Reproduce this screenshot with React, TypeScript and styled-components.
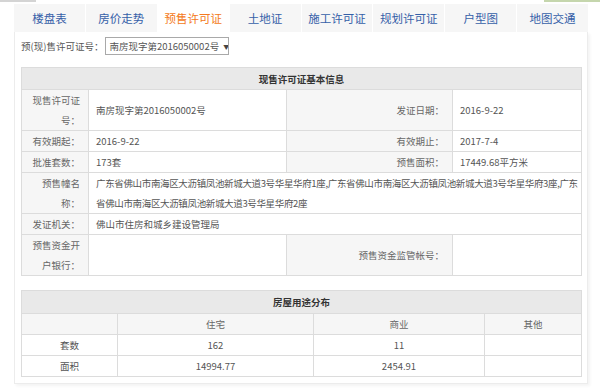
import React, { useState } from 'react';
import styled, { createGlobalStyle } from 'styled-components';

const GlobalStyle = createGlobalStyle`
  html, body {
    margin: 0;
    padding: 0;
    background: #fff;
    font-family: "Noto Sans CJK SC", "Noto Sans", sans-serif;
  }
`;

const Page = styled.div`
  width: 600px;
  height: 388px;
  overflow: hidden;
  background: #fff;
`;

const TopStrip = styled.div`
  height: 4px;
  display: flex;
  justify-content: space-between;
`;

const StripPiece = styled.div<{ $w: number; $color: string }>`
  width: ${p => p.$w}px;
  height: 2px;
  background: ${p => p.$color};
`;

const Tabs = styled.div`
  margin-left: 14px;
  width: 574px;
  height: 28px;
  display: flex;
  background: #f5f5f5;
`;

const Tab = styled.div<{ $active?: boolean }>`
  flex: 1;
  text-align: center;
  line-height: 28px;
  font-size: 11.5px;
  color: ${p => (p.$active ? '#f47a20' : '#3560a8')};
  background: ${p => (p.$active ? '#fff' : '#f6f6f6')};
  border-right: 1px solid #fff;
  cursor: pointer;

  &:last-child {
    border-right: none;
  }
`;

const Panel = styled.div`
  margin-left: 14px;
  width: 574px;
  box-sizing: border-box;
  padding: 5px 6px 6px;
  border: 1px solid #ececec;
  border-top: none;
  box-shadow: 2px 2px 3px rgba(0, 0, 0, 0.05);
  background: #fff;
`;

const FilterRow = styled.div`
  display: flex;
  align-items: center;
  height: 18px;
  font-size: 9.5px;
  color: #555;
  white-space: nowrap;
`;

const SelectBox = styled.div`
  height: 18px;
  width: 124px;
  box-sizing: border-box;
  margin-left: 2px;
  border: 1px solid #a9a9a9;
  background: #fff;
  display: flex;
  align-items: center;
  gap: 4px;
  padding: 0 3px;
  font-size: 9.5px;
  color: #555;
  white-space: nowrap;
  overflow: hidden;
  cursor: pointer;
`;

const Caret = styled.span`
  font-size: 6px;
  color: #444;
`;

const Table = styled.table<{ $mt: number }>`
  margin-top: ${p => p.$mt}px;
  width: 560px;
  border-collapse: collapse;
  table-layout: fixed;
  font-size: 9.5px;
  line-height: 20px;
  color: #555;
`;

const HeadCell = styled.th<{ $h: number }>`
  height: ${p => p.$h}px;
  padding: 0;
  background: #e9e9e9;
  border: 1px solid #dcdcdc;
  color: #333;
  font-weight: bold;
  text-align: center;
`;

const Label = styled.td`
  padding: 0 8px 0 4px;
  background: #f6f6f6;
  border: 1px solid #dcdcdc;
  text-align: right;
  color: #666;
  word-break: break-all;
`;

const Value = styled.td<{ $tight?: boolean }>`
  padding: 0 ${p => (p.$tight ? 2 : 6)}px 0 7px;
  border: 1px solid #dcdcdc;
  background: #fff;
  color: #555;
  letter-spacing: ${p => (p.$tight ? '-0.35px' : 'normal')};
  word-break: break-all;
`;

const SubHead = styled.td`
  padding: 0;
  background: #f6f6f6;
  border: 1px solid #dcdcdc;
  text-align: center;
  color: #666;
`;

const Cell = styled.td`
  padding: 0;
  border: 1px solid #dcdcdc;
  text-align: center;
  color: #555;
`;

const tabs = ['楼盘表', '房价走势', '预售许可证', '土地证', '施工许可证', '规划许可证', '户型图', '地图交通'];

const usage = [
  { name: '套数', house: '162', shop: '11', other: '' },
  { name: '面积', house: '14994.77', shop: '2454.91', other: '' },
];

const App: React.FC = () => {
  const [active, setActive] = useState('预售许可证');

  return (
    <Page>
      <GlobalStyle />
      <TopStrip>
        <StripPiece $w={36} $color="#d4d4d4" />
        <StripPiece $w={56} $color="#c5d6ad" />
      </TopStrip>

      <Tabs>
        {tabs.map(t => (
          <Tab key={t} $active={t === active} onClick={() => setActive(t)}>
            {t}
          </Tab>
        ))}
      </Tabs>

      <Panel>
        <FilterRow>
          预(现)售许可证号：
          <SelectBox>
            <span>南房现字第2016050002号</span>
            <Caret>▼</Caret>
          </SelectBox>
        </FilterRow>

        <Table $mt={12}>
          <colgroup>
            <col style={{ width: 67 }} />
            <col style={{ width: 198 }} />
            <col style={{ width: 166 }} />
            <col style={{ width: 129 }} />
          </colgroup>
          <thead>
            <tr>
              <HeadCell $h={21} colSpan={4}>现售许可证基本信息</HeadCell>
            </tr>
          </thead>
          <tbody>
            <tr>
              <Label>现售许可证号：</Label>
              <Value>南房现字第2016050002号</Value>
              <Label>发证日期：</Label>
              <Value>2016-9-22</Value>
            </tr>
            <tr>
              <Label>有效期起：</Label>
              <Value>2016-9-22</Value>
              <Label>有效期止：</Label>
              <Value>2017-7-4</Value>
            </tr>
            <tr>
              <Label>批准套数：</Label>
              <Value>173套</Value>
              <Label>预售面积：</Label>
              <Value>17449.68平方米</Value>
            </tr>
            <tr>
              <Label>预售幢名称：</Label>
              <Value $tight colSpan={3}>
                广东省佛山市南海区大沥镇凤池新城大道3号华星华府1座,广东省佛山市南海区大沥镇凤池新城大道3号华星华府3座,广东省佛山市南海区大沥镇凤池新城大道3号华星华府2座
              </Value>
            </tr>
            <tr>
              <Label>发证机关：</Label>
              <Value colSpan={3}>佛山市住房和城乡建设管理局</Value>
            </tr>
            <tr>
              <Label>预售资金开户银行：</Label>
              <Value></Value>
              <Label>预售资金监管帐号：</Label>
              <Value></Value>
            </tr>
          </tbody>
        </Table>

        <Table $mt={14}>
          <colgroup>
            <col style={{ width: 96 }} />
            <col style={{ width: 196 }} />
            <col style={{ width: 171 }} />
            <col style={{ width: 97 }} />
          </colgroup>
          <thead>
            <tr>
              <HeadCell $h={22} colSpan={4}>房屋用途分布</HeadCell>
            </tr>
          </thead>
          <tbody>
            <tr>
              <SubHead></SubHead>
              <SubHead>住宅</SubHead>
              <SubHead>商业</SubHead>
              <SubHead>其他</SubHead>
            </tr>
            {usage.map(u => (
              <tr key={u.name}>
                <Cell>{u.name}</Cell>
                <Cell>{u.house}</Cell>
                <Cell>{u.shop}</Cell>
                <Cell>{u.other}</Cell>
              </tr>
            ))}
          </tbody>
        </Table>
      </Panel>
    </Page>
  );
};

export default App;
